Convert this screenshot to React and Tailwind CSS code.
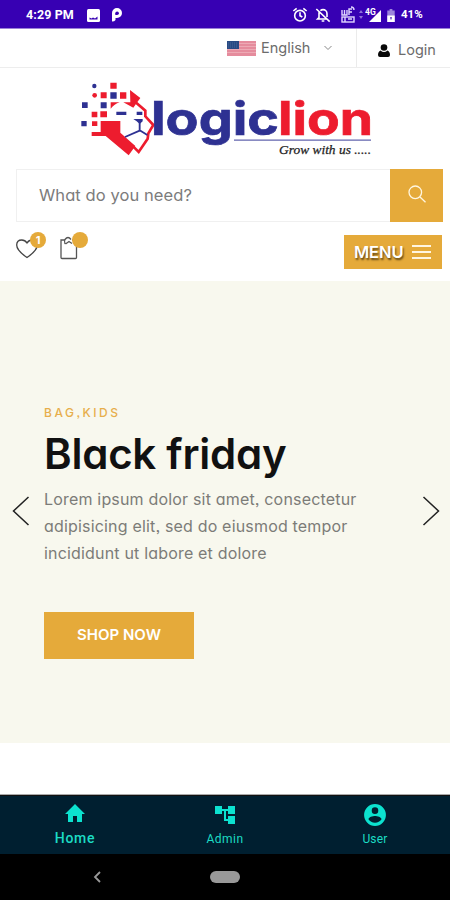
import React from "react";

const sans = "font-['Inter','Open_Sans',sans-serif] [font-feature-settings:'cv11','ss03']";

function StatusBar() {
  return (
    <div className="flex h-[29px] items-center border-b border-[#9a80d8] bg-[#3700b3] pt-[2px] font-['Roboto',sans-serif] text-white">
      <span className="ml-[26px] w-[49px] whitespace-nowrap text-[12.5px] font-bold tracking-[0.1px]">4:29 PM</span>
      <svg className="ml-3 h-[13px] w-[13px]" viewBox="0 0 13 13">
        <rect width="13" height="13" rx="1.5" fill="#fff" />
        <path d="M2.5 10.500V8.500L4.500 9.500 6 8.500 8 9.500 10.500 7.500V10.500Z" fill="#3700b3" />
      </svg>
      <svg className="ml-[11px] h-[14px] w-[12px]" viewBox="0 0 12 14">
        <path d="M1 13.500V5a5 5 0 1 1 5 5H4.500V12Q3.500 13.500 1 13.500Z" fill="#fff" />
        <path d="M4.300 7V5.200a1.800 1.800 0 1 1 1.800 1.800Z" fill="#3700b3" />
      </svg>
      <svg className="ml-[169px] h-4 w-4" viewBox="0 0 24 24" fill="none" stroke="#fff" strokeWidth="2.400">
        <circle cx="12" cy="13" r="8" />
        <path d="M12 8v5l3.500 2M2 6l5-4M22 6l-5-4" />
      </svg>
      <svg className="ml-[7px] h-4 w-4" viewBox="0 0 24 24" fill="none" stroke="#fff" strokeWidth="2.400">
        <path d="M8 5.500Q10 4 12 4a6 6 0 0 1 6 6v5M6 8v8l-2 2h14M2 3l20 19M10 21h4" />
      </svg>
      <svg className="ml-[10px] h-[18px] w-[25px]" viewBox="0 0 25 18">
        <g fill="none" stroke="#e0d5ff" strokeWidth="1.400">
          <path d="M1 4v5h5V4M3.500 4v5M8 9V3h3M8 6h3M10 1q3 0 3 3" />
          <rect x="1" y="11" width="12" height="5" />
          <path d="M4 11v5M7 13h4" />
        </g>
        <path d="m18 7 2-3 2 3ZM18 10l2 3 2-3Z" fill="#8f70d8" />
      </svg>
      <svg className="ml-[-1px] h-[16px] w-[18px]" viewBox="0 0 18 16">
        <path d="M4 15 16 3v12Z" fill="#fff" />
        <text x="0" y="8" fontSize="8.500" fontWeight="bold" fill="#fff" fontFamily="Roboto">4G</text>
      </svg>
      <svg className="ml-[4px] h-[13px] w-[8px]" viewBox="0 0 8 14">
        <path d="M2.500 0h3v1.500H8V14H0V1.500h2.500Z" fill="#9c84dc" />
        <path d="M0 7h8v7H0Z" fill="#fff" />
        <path d="m3 9 2 0-1 3Z" fill="#3700b3" />
      </svg>
      <span className="ml-[6px] text-[11.5px] font-bold">41%</span>
    </div>
  );
}

function TopBar() {
  return (
    <div className="flex h-[39px] border-b border-[#ededed] text-[#6c6c6c]">
      <div className="flex flex-1 items-center justify-end border-r border-[#ebebeb] pr-[24px]">
        <svg className="mt-px h-[15px] w-[29px]" viewBox="0 0 29 15">
          <rect width="29" height="15" fill="#e58c9d" />
          <path d="M0 2.500h29M0 5.500h29M0 8.500h29M0 11.500h29" stroke="#edaab5" />
          <rect width="12" height="8" fill="#284a84" />
          <path d="M1 2h10M1 4h10M1 6h10" stroke="#5774a2" strokeWidth=".7" strokeDasharray="1 1" />
        </svg>
        <span className="ml-[5px] w-[51px] text-[14.5px]">English</span>
        <svg className="ml-[12px] h-2 w-2" viewBox="0 0 8 8" fill="none" stroke="#888"><path d="m.5 2 3.500 3.500L7.500 2" /></svg>
      </div>
      <div className="flex w-[93px] items-center pt-1">
        <svg className="ml-[21px] h-[13px] w-[12px]" viewBox="0 0 12 13" fill="#080808">
          <circle cx="6" cy="3.500" r="3.300" />
          <path d="M2.500 6.500q3.500 3 7 0 2.500 1 2.500 4.500 0 2-2 2H2q-2 0-2-2 0-3.500 2.500-4.500Z" />
        </svg>
        <span className="ml-[8px] text-[14.5px]">Login</span>
      </div>
    </div>
  );
}

function Logo() {
  return (
    <svg className="ml-[70px] block h-[95px] w-[310px]" viewBox="0 0 310 95">
      <g transform="scale(.33333)">
        <g fill="#ed1c2e">
          <path d="M121 38h19v18h-19ZM92 67h18v18H92ZM150 67h19v19h-19ZM65 125h17v17H65ZM91 124h20v18H91ZM66 154h16v14H66Z" />
          <circle cx="74" cy="76" r="7" />
          <path d="M122 97h27q-16 5-27 19Z" />
          <path d="M180 60 211 84 200 99 190 113 160 97H181Z" />
          <path d="M65 186H92V153H151V188L196 228 176 256 107 198H65Z" />
        </g>
        <path d="M196 96 226 122V139L250 165 235 190 233 206 206 246 190 230" fill="none" stroke="#ed1c2e" strokeWidth="8" />
        <g fill="#2e3192">
          <path d="M121 67h19v19h-19ZM36 97h17v17H36ZM92 97h18v18H92ZM34 153h16v16H34ZM139 125h30v10h-30ZM200 125h17v10h-17ZM190 147h28v7l-9 8-9-8Z" />
          <circle cx="73" cy="48" r="6.500" />
        </g>
        <path d="M209 157v25L165 201M209 181 232 195" fill="none" stroke="#2e3192" strokeWidth="5.500" />
      </g>
      <g fontFamily="Inter" fontWeight="700" fontSize="46" strokeWidth=".7">
        <text x="81" y="64.500" textLength="128" lengthAdjust="spacingAndGlyphs" fill="#2e3192" stroke="#2e3192">logic</text>
        <text x="208" y="64.500" textLength="95" lengthAdjust="spacingAndGlyphs" fill="#ed1c2e" stroke="#ed1c2e">lion</text>
      </g>
      <path d="M164 70.200H301" stroke="#6264ae" strokeWidth="1.300" />
      <text x="209" y="83.500" textLength="92" lengthAdjust="spacingAndGlyphs" fontFamily="Liberation Serif" fontStyle="italic" fontSize="13" fill="#222" stroke="#222" strokeWidth=".25">Grow with us .....</text>
    </svg>
  );
}

function Search() {
  return (
    <div className="ml-4 mr-[7px] mt-1 flex h-[53px]">
      <div className="flex flex-1 items-center border border-r-0 border-[#f0f0f0] pl-[22px] text-[16.5px] tracking-[0.08px] text-[#7c7c7c]">What do you need?</div>
      <div className="flex w-[53px] items-center justify-center bg-[#e5aa3a]">
        <svg className="mb-1 h-[18px] w-[18px]" viewBox="0 0 18 18" fill="none" stroke="#fff6df" strokeWidth="1.300">
          <circle cx="7.300" cy="7.300" r="6.300" /><path d="m12 12 5.500 5.200" />
        </svg>
      </div>
    </div>
  );
}

function Actions() {
  return (
    <div className="flex h-[59px] items-start pl-4 pr-2">
      <div className="relative mt-[16px] h-[22px] w-[22px]">
        <svg className="h-[22px] w-[22px]" viewBox="0 0 22 22" fill="none" stroke="#444" strokeWidth="1.300">
          <path d="M11 19.500Q.7 12.500.7 7 .7 2 5.800 2 9 2 11 5 13 2 16 2q5.300 0 5.300 5 0 5.500-10.300 12.500Z" />
        </svg>
        <span className="absolute -top-[6px] left-[14px] flex h-4 w-4 items-center justify-center rounded-full bg-[#e5aa3a] text-[11px] font-bold text-white">1</span>
      </div>
      <div className="relative ml-[22px] mt-[14px] h-[24px] w-[18px]">
        <svg className="h-[24px] w-[18px]" viewBox="0 0 18 24" fill="none" stroke="#555" strokeWidth="1.300">
          <path d="M5 4H1V21.500Q1 22.500 2 22.500H15.500Q16.500 22.500 16.500 21.500V4H12" />
          <path d="M5 8q-1-3 0-4.500 3-4 6 0M5.500 8 9 5.500l3 2" />
        </svg>
        <span className="absolute -top-[4px] left-[12px] h-4 w-4 rounded-full bg-[#e5aa3a]" />
      </div>
      <div className="ml-auto mt-[13px] flex h-[34px] w-[98px] items-center bg-[#e5aa3a] pl-[10px]">
        <span className="w-[51px] text-[16.5px] font-semibold tracking-[-0.1px] text-white [text-shadow:1px_2px_2px_#604514]">MENU</span>
        <span className="ml-[7px] flex flex-col gap-[4px]">
          <i className="h-[2px] w-[19px] bg-[#fff5e0]" />
          <i className="h-[2px] w-[19px] bg-[#fff5e0]" />
          <i className="h-[2px] w-[19px] bg-[#fff5e0]" />
        </span>
      </div>
    </div>
  );
}

function Hero() {
  return (
    <div className="flex h-[462px] bg-[#f8f8ee]">
      <svg className="ml-[12px] mt-[215px] h-[30px] w-[18px]" viewBox="0 0 18 30" fill="none" stroke="#222" strokeWidth="1.500"><path d="M16.500 1 1.500 15l15 14" /></svg>
      <div className="ml-[14px] w-[378px] pt-[123px]">
        <div className="h-[18px] text-[12px] font-medium leading-[18px] tracking-[2.5px] text-[#e7ae4b]">BAG,KIDS</div>
        <h1 className="mt-[7px] h-[50px] whitespace-nowrap text-[42px] font-semibold leading-[50px] tracking-[-0.25px] text-[#111]">Black friday</h1>
        <p className="mt-[7px] whitespace-nowrap text-[16px] leading-[27px] tracking-[0.18px] text-[#7c7c78]">
          Lorem ipsum dolor sit amet, consectetur<br />adipisicing elit, sed do eiusmod tempor<br />incididunt ut labore et dolore
        </p>
        <div className="mt-[45px] flex h-[47px] w-[150px] items-center justify-center bg-[#e5aa3a] text-[15px] font-semibold text-white">SHOP NOW</div>
      </div>
      <svg className="mt-[215px] h-[30px] w-[18px]" viewBox="0 0 18 30" fill="none" stroke="#222" strokeWidth="1.500"><path d="m1.500 1 15 14-15 14" /></svg>
    </div>
  );
}

function BottomNav() {
  return (
    <div className="mt-[51px] grid h-[60px] grid-cols-3 border-t border-[#aaa] bg-[#001f30] font-['Roboto',sans-serif] text-[#1cdcc4] shadow-[inset_0_1px_0_#111]">
      <div className="flex flex-col items-center pt-[6px]">
        <svg className="h-6 w-6" viewBox="0 0 24 24" fill="#0ce2cf"><path d="M10 21v-6h4v6h5v-8h3L12 3 2 13h3v8Z" /></svg>
        <span className="mt-[5px] text-[14px] font-medium leading-[16px] tracking-[0.7px]">Home</span>
      </div>
      <div className="flex flex-col items-center pt-[8px]">
        <svg className="h-6 w-6" viewBox="0 0 24 24" fill="#0ce2cf"><path d="M22 11V3h-7v3H9V3H2v8h7V8h2v10h4v3h7v-8h-7v3h-2V8h2v3Z" /></svg>
        <span className="mt-[4px] text-[12px] leading-[16px] tracking-[0.5px]">Admin</span>
      </div>
      <div className="flex flex-col items-center pt-[8px]">
        <svg className="h-[24px] w-[26px]" viewBox="1 1 22 22" fill="#0ce2cf"><path d="M12 2a10 10 0 1 0 0 20 10 10 0 0 0 0-20Zm0 3a3 3 0 1 1 0 6 3 3 0 0 1 0-6Zm0 14.200A7.200 7.200 0 0 1 6 16c.03-2 4-3.100 6-3.100s6 1.100 6 3.100a7.200 7.200 0 0 1-6 3.200Z" /></svg>
        <span className="mt-[4px] text-[12px] leading-[16px] tracking-[0.2px]">User</span>
      </div>
    </div>
  );
}

export default function App() {
  return (
    <div className={"h-[900px] w-[450px] overflow-hidden bg-white " + sans}>
      <StatusBar />
      <TopBar />
      <div className="h-[2px]" />
      <Logo />
      <Search />
      <Actions />
      <Hero />
      <BottomNav />
      <div className="flex h-[46px] items-center bg-black">
        <svg className="ml-[93px] h-3 w-2" viewBox="0 0 8 12" fill="none" stroke="#999" strokeWidth="1.800"><path d="M7 1 2 6l5 5" /></svg>
        <div className="ml-[109px] h-3 w-[30px] rounded-full bg-[#999]" />
      </div>
    </div>
  );
}
